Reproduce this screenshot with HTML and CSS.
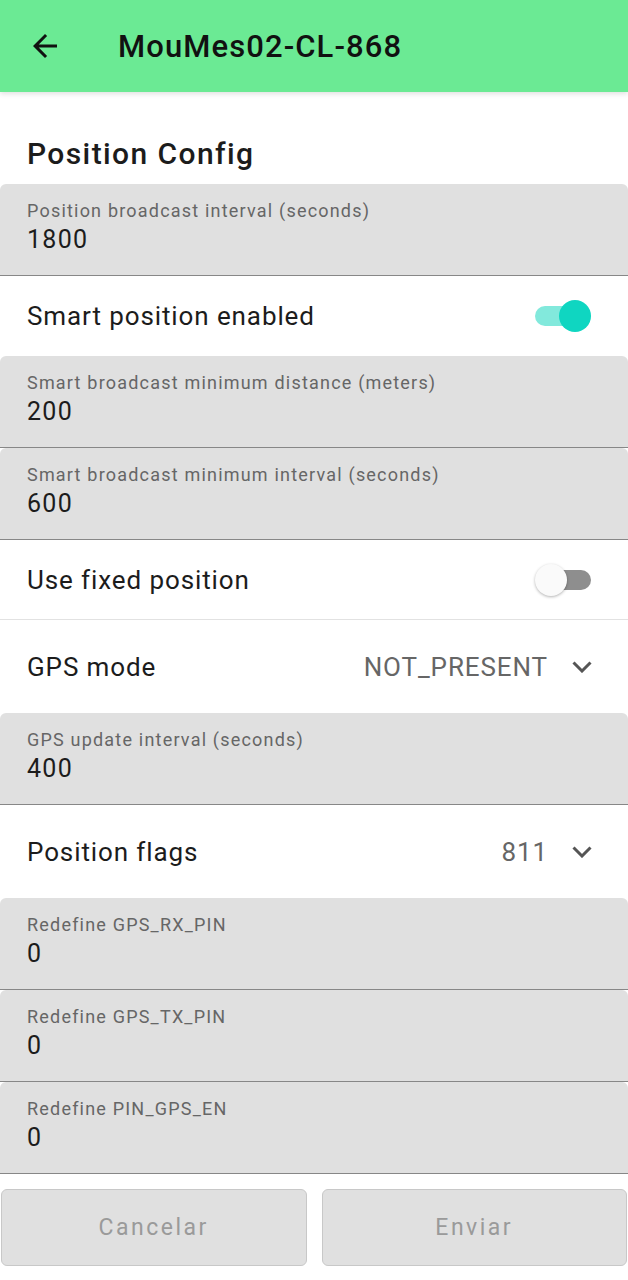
FILE: index.html
```html
<!DOCTYPE html>
<html>
<head>
<meta charset="utf-8">
<link rel="stylesheet" href="styles.css">
</head>
<body>
<header class="appbar">
  <svg class="back" viewBox="0 0 24 24" width="36" height="36"><path d="M20 11H7.83l5.59-5.59L12 4l-8 8 8 8 1.41-1.41L7.83 13H20v-2z" fill="#111"/></svg>
  <h1 class="title">MouMes02-CL-868</h1>
</header>
<main class="content">
  <h2 class="heading">Position Config</h2>

  <div class="field">
    <div class="label">Position broadcast interval (seconds)</div>
    <div class="value">1800</div>
  </div>

  <div class="row">
    <span class="row-text">Smart position enabled</span>
    <span class="switch on"><span class="track"></span><span class="thumb"></span></span>
  </div>

  <div class="field">
    <div class="label">Smart broadcast minimum distance (meters)</div>
    <div class="value">200</div>
  </div>

  <div class="field">
    <div class="label">Smart broadcast minimum interval (seconds)</div>
    <div class="value">600</div>
  </div>

  <div class="row divided">
    <span class="row-text">Use fixed position</span>
    <span class="switch off"><span class="track"></span><span class="thumb"></span></span>
  </div>

  <div class="row tall">
    <span class="row-text">GPS mode</span>
    <span class="select"><span class="select-value">NOT_PRESENT</span><svg class="chev" viewBox="0 0 20 12" width="20" height="12"><path d="M1.5 1.5l8.5 8.5 8.5-8.5" fill="none" stroke="#555" stroke-width="3"/></svg></span>
  </div>

  <div class="field">
    <div class="label">GPS update interval (seconds)</div>
    <div class="value">400</div>
  </div>

  <div class="row tall">
    <span class="row-text">Position flags</span>
    <span class="select"><span class="select-value">811</span><svg class="chev" viewBox="0 0 20 12" width="20" height="12"><path d="M1.5 1.5l8.5 8.5 8.5-8.5" fill="none" stroke="#555" stroke-width="3"/></svg></span>
  </div>

  <div class="field">
    <div class="label">Redefine GPS_RX_PIN</div>
    <div class="value">0</div>
  </div>

  <div class="field">
    <div class="label">Redefine GPS_TX_PIN</div>
    <div class="value">0</div>
  </div>

  <div class="field">
    <div class="label">Redefine PIN_GPS_EN</div>
    <div class="value">0</div>
  </div>

  <div class="actions">
    <button class="btn">Cancelar</button>
    <button class="btn">Enviar</button>
  </div>
</main>
</body>
</html>
```

FILE: styles.css
```css
html, body {
  margin: 0;
  padding: 0;
  background: #ffffff;
  font-family: Roboto, "Noto Sans", sans-serif;
}

.appbar {
  height: 92px;
  background: #6bea94;
  display: flex;
  align-items: center;
  padding-left: 27px;
  box-sizing: border-box;
  box-shadow: 0 2px 5px rgba(0, 0, 0, 0.12);
  position: relative;
  z-index: 1;
}

.back {
  display: block;
  flex: none;
}

.title {
  margin: 0 0 0 55px;
  font-size: 31px;
  font-weight: 500;
  color: #111;
  letter-spacing: 1.1px;
}

.heading {
  margin: 0;
  padding: 45px 27px 14px;
  font-size: 30px;
  line-height: 33px;
  font-weight: 500;
  color: #1c1c1c;
  letter-spacing: 1.4px;
}

.field {
  height: 92px;
  box-sizing: border-box;
  background: #e0e0e0;
  border-bottom: 1px solid #878787;
  border-radius: 6px 6px 0 0;
  padding: 15px 27px 0;
}

.label {
  font-size: 18px;
  line-height: 24px;
  color: #666;
  letter-spacing: 1.2px;
}

.value {
  margin-top: 2px;
  font-size: 25px;
  line-height: 30px;
  color: #1c1c1c;
  letter-spacing: 1.3px;
}

.row {
  height: 80px;
  box-sizing: border-box;
  display: flex;
  align-items: center;
  justify-content: space-between;
  padding: 0 37px 0 27px;
}

.row.divided {
  border-bottom: 1px solid #e2e2e2;
}

.row.tall {
  height: 93px;
  padding-right: 36px;
}

.row-text {
  font-size: 26px;
  color: #1c1c1c;
  letter-spacing: 0.9px;
}

.switch {
  position: relative;
  width: 56px;
  height: 32px;
  flex: none;
}

.switch .track {
  position: absolute;
  left: 0;
  right: 2px;
  top: 6px;
  height: 20px;
  border-radius: 10px;
}

.switch .thumb {
  position: absolute;
  top: 0;
  width: 32px;
  height: 32px;
  border-radius: 50%;
}

.switch.on .track {
  background: #82e9dc;
}

.switch.on .thumb {
  right: 0;
  background: #0fd6c1;
}

.switch.off .track {
  background: #8e8e8e;
  right: 0;
  left: 2px;
}

.switch.off .thumb {
  left: 0;
  background: #fafafa;
  box-shadow: 0 1px 3px rgba(0, 0, 0, 0.3);
}

.select {
  display: flex;
  align-items: center;
}

.select-value {
  font-size: 26px;
  color: #666;
  letter-spacing: 0.9px;
}

.chev {
  display: block;
  margin-left: 24px;
}

.actions {
  display: flex;
  gap: 15px;
  padding: 15px 1px 0;
}

.btn {
  flex: 1;
  height: 77px;
  border: 1px solid #c8c8c8;
  border-radius: 6px;
  background: #e0e0e0;
  font-family: Roboto, "Noto Sans", sans-serif;
  font-size: 23px;
  font-weight: 400;
  letter-spacing: 2.5px;
  color: #9a9a9a;
  padding: 0;
}
```
